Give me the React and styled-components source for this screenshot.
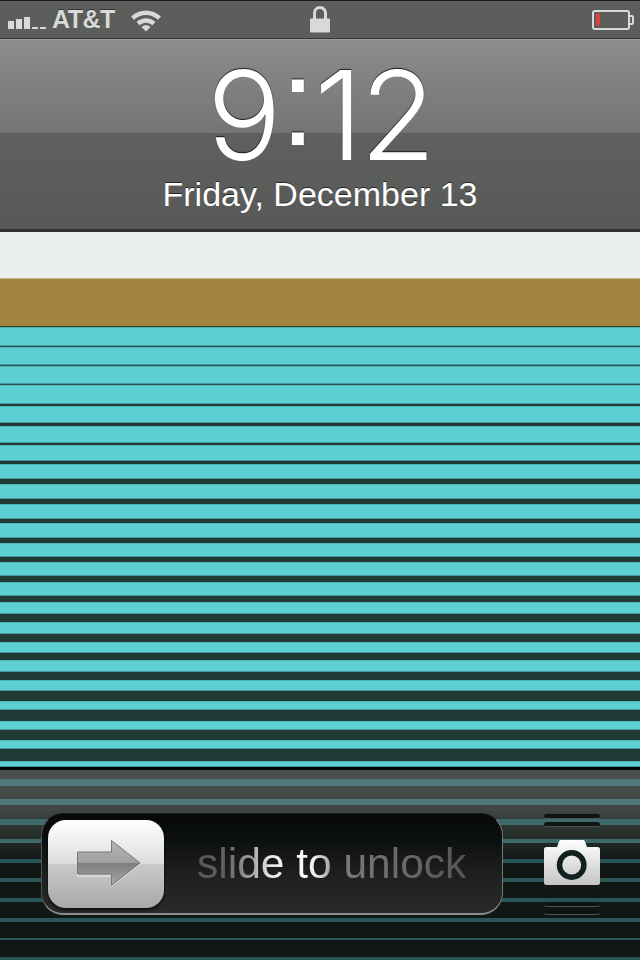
import React from 'react'
import styled, { createGlobalStyle } from 'styled-components'

const GlobalStyle = createGlobalStyle`
	html, body { margin: 0; padding: 0; background: #000; }
	body { font-family: "Liberation Sans", Arial, sans-serif; }
`

// [teal height, dark height] for every blind of the wallpaper, top to bottom
const BLINDS = [
	[19, 1], [18, 1], [18, 1], [19, 2], [17, 3], [17, 2], [16, 3], [15, 5],
	[15, 5], [15, 4], [15, 5], [14, 5], [14, 6], [14, 6], [12, 8], [12, 8],
	[11, 7], [12, 8], [11, 10], [9, 11], [9, 10], [9, 12], [6, 0],
]

// dimmed stripes that keep running behind the bottom bar: [top, bottom] from bar top
const DIM_BANDS = [
	[9, 16], [29, 35], [49, 55], [69, 73], [89, 93], [108, 112], [128, 132], [148, 152], [168, 170], [187, 190],
]

const bandStops = DIM_BANDS.map(([a, b], i) => {
	const mix = i < 2 ? '#50777a' : i < 4 ? '#3f6a6c' : '#2a5557'
	return `transparent ${a}px, ${mix} ${a}px, ${mix} ${b}px, transparent ${b}px`
}).join(', ')

const Phone = styled.div`
	width: 640px;
	height: 960px;
	display: flex;
	flex-direction: column;
	overflow: hidden;
	background: #000;
`

const StatusBar = styled.div`
	height: 39px;
	flex: none;
	display: grid;
	grid-template-columns: 1fr auto 1fr;
	align-items: center;
	padding: 0 8px;
	box-sizing: border-box;
	background: #5c5e5c;
	border-top: 1px solid #1a1a1a;
	border-bottom: 1px solid #353735;
	color: #d9d9d9;
`

const StatusLeft = styled.div`
	display: flex;
	align-items: center;
`

const Carrier = styled.span`
	font-size: 25px;
	font-weight: 700;
	letter-spacing: -0.5px;
	margin: 0 15px 0 6px;
	text-shadow: 0 -1px 0 rgba(0, 0, 0, 0.45);
`

const StatusRight = styled.div`
	display: flex;
	justify-content: flex-end;
	margin-right: -2px;
`

const ClockPanel = styled.div`
	height: 191px;
	flex: none;
	display: flex;
	flex-direction: column;
	align-items: center;
	box-sizing: border-box;
	color: #fff;
	background: linear-gradient(#8b8d8b 0, #737573 93px, #5f615f 93px, #575957 100%);
	border-top: 1px solid #9a9c9a;
	border-bottom: 1px solid #2e302e;
`

const Time = styled.div`
	font-family: "Inter", "Liberation Sans", sans-serif;
	font-weight: 300;
	font-size: 124px;
	line-height: 110px;
	margin-top: 20px;
	letter-spacing: -3px;
	text-shadow: 0 -1px 1px rgba(0, 0, 0, 0.8);
`

const Colon = styled.span`
	display: inline-block;
	font-family: "Liberation Sans", Arial, sans-serif;
	font-weight: 400;
	font-size: 125px;
	margin: 0 2px;
	transform: translateY(-15px);
`

const DateLine = styled.div`
	font-size: 34px;
	line-height: 36px;
	margin-top: 4px;
	text-shadow: 0 -1px 0 rgba(0, 0, 0, 0.6);
`

const Wallpaper = styled.div`
	flex: 1;
	display: flex;
	flex-direction: column;
`

const WhiteBand = styled.div`
	height: 46px;
	flex: none;
	background: #ebeff0;
	border-top: 2px solid #2f312f;
`

const GoldBand = styled.div`
	height: 47px;
	flex: none;
	background: #a0843f;
	border-top: 1px solid #c4b48a;
	border-bottom: 1px solid #2c3a2a;
`

const Blind = styled.div`
	flex: none;
	height: ${p => p.$teal + p.$dark}px;
	background: linear-gradient(
		#4fb4b8 1px,
		#5dd0d4 1px,
		#5dd0d4 ${p => p.$teal - 1}px,
		#46979a ${p => p.$teal - 1}px,
		#46979a ${p => p.$teal}px,
		${p => (p.$dark === 1 ? '#2c5556' : '#213a35')} ${p => p.$teal}px
	);
`

const BottomBar = styled.div`
	height: 193px;
	flex: none;
	display: flex;
	align-items: flex-start;
	box-sizing: border-box;
	padding: 43px 0 0 41px;
	border-top: 3px solid #050807;
	background:
		linear-gradient(to bottom, ${bandStops}, transparent),
		linear-gradient(#4c514f 0, #3f4643 40px, #2a322f 60px, #101715 92px, #101715 100%);
`

const Slider = styled.div`
	width: 462px;
	height: 102px;
	flex: none;
	display: flex;
	align-items: center;
	gap: 33px;
	padding-left: 6px;
	box-sizing: border-box;
	border-radius: 22px;
	border: 1px solid #1a1e1d;
	border-bottom: 2px solid #8a8c8b;
	border-left-color: #555;
	border-right-color: #777;
	background: linear-gradient(#060908 0, #0d1110 30%, #1c1e1d 55%, #2a2a2a 100%);
`

const Knob = styled.div`
	width: 116px;
	height: 88px;
	flex: none;
	display: flex;
	align-items: center;
	justify-content: center;
	padding-left: 6px;
	box-sizing: border-box;
	border-radius: 18px;
	background: linear-gradient(#ffffff 0, #dcdcdc 50%, #cacaca 50%, #a9a9a9 100%);
	box-shadow: 0 2px 3px rgba(0, 0, 0, 0.7);
`

const Hint = styled.span`
	font-size: 42.5px;
	line-height: 46px;
	background: linear-gradient(90deg, #585858 0, #606060 10%, #a0a0a0 20%, #e5e5e5 27%, #ffffff 36%, #eeeeee 44%, #9a9a9a 50%, #7a7a7a 55%, #555555 100%);
	-webkit-background-clip: text;
	background-clip: text;
	color: transparent;
`

const CameraGrabber = styled.div`
	flex: none;
	width: 56px;
	margin: 1px 0 0 41px;
	display: flex;
	flex-direction: column;
	align-items: center;
	gap: 3px;
`

const Groove = styled.div`
	width: 56px;
	height: 4px;
	border-radius: 3px;
	background: #0f1413;
	border-bottom: 1px solid #4a5352;
`

const CameraWrap = styled.div`
	margin: 10px 0 14px;
	height: 45px;
	display: flex;
`

const SignalIcon = () => (
	<svg width="38" height="19" viewBox="0 0 38 19">
		<g fill="#d9d9d9">
			<rect x="0" y="11" width="6" height="8" />
			<rect x="8" y="9" width="6" height="10" />
			<rect x="16" y="7" width="6" height="12" />
			<rect x="24" y="17" width="6" height="2" />
			<rect x="32" y="17" width="6" height="2" />
		</g>
	</svg>
)

const WifiIcon = () => (
	<svg width="32" height="24" viewBox="0 0 32 24">
		<path d="M1 8.5 C9.5 0.5 22.5 0.5 31 8.5 L28 11.8 C21 5.5 11 5.5 4 11.8 Z" fill="#d9d9d9" />
		<path d="M6.5 14 C12 9 20 9 25.5 14 L22.5 17.2 C18.5 13.8 13.5 13.8 9.5 17.2 Z" fill="#d9d9d9" />
		<path d="M11.5 19 C14 16.8 18 16.8 20.5 19 L16 23.5 Z" fill="#d9d9d9" />
	</svg>
)

const LockIcon = () => (
	<svg width="20" height="28" viewBox="0 0 20 28">
		<path d="M4.5 13 V7 A5.5 5.5 0 0 1 15.5 7 V13" fill="none" stroke="#d9d9d9" strokeWidth="3" />
		<rect x="0" y="12.5" width="20" height="14" rx="1" fill="#d9d9d9" />
	</svg>
)

const BatteryIcon = () => (
	<svg width="42" height="20" viewBox="0 0 42 20">
		<rect x="1" y="1" width="36" height="18" rx="2" fill="none" stroke="#d9d9d9" strokeWidth="2" />
		<path d="M38 6 h2 a1 1 0 0 1 1 1 v6 a1 1 0 0 1 -1 1 h-2" fill="none" stroke="#d9d9d9" strokeWidth="2" />
		<rect x="4" y="3.5" width="4" height="12" fill="#d8443a" />
	</svg>
)

const ArrowIcon = () => (
	<svg width="64" height="47" viewBox="0 0 64 47">
		<defs>
			<linearGradient id="arrowFill" x1="0" y1="0" x2="0" y2="1">
				<stop offset="0" stopColor="#b4b4b4" />
				<stop offset="0.5" stopColor="#a0a0a0" />
				<stop offset="0.5" stopColor="#7e7e7e" />
				<stop offset="1" stopColor="#a8a8a8" />
			</linearGradient>
		</defs>
		<path d="M0.5 13 H34.5 V1.5 L63 23 L34.5 45.5 V35 H0.5 Z" fill="none" stroke="#fff" strokeOpacity="0.7" transform="translate(0 1)" />
		<path d="M0.5 12 H34.5 V0.5 L63 23 L34.5 45.5 V34 H0.5 Z" fill="url(#arrowFill)" stroke="#777" />
	</svg>
)

const CameraIcon = () => (
	<svg width="56" height="45" viewBox="0 0 56 45">
		<defs>
			<linearGradient id="cameraFill" x1="0" y1="0" x2="0" y2="1">
				<stop offset="0" stopColor="#ffffff" />
				<stop offset="1" stopColor="#c4c4c4" />
			</linearGradient>
		</defs>
		<path
			fill="url(#cameraFill)"
			d="M2.5 7 H13 L15 1.5 Q15.5 0 17 0 H39 Q40.5 0 41 1.5 L43 7 H53.5 Q56 7 56 9.5 V42.5 Q56 45 53.5 45 H2.5 Q0 45 0 42.5 V9.5 Q0 7 2.5 7 Z"
		/>
		<circle cx="27.7" cy="25" r="12.2" fill="none" stroke="#12201f" strokeWidth="5.5" />
	</svg>
)

const App = () => (
	<Phone>
		<GlobalStyle />
		<StatusBar>
			<StatusLeft>
				<SignalIcon />
				<Carrier>AT&amp;T</Carrier>
				<WifiIcon />
			</StatusLeft>
			<LockIcon />
			<StatusRight>
				<BatteryIcon />
			</StatusRight>
		</StatusBar>
		<ClockPanel>
			<Time>9<Colon>:</Colon>12</Time>
			<DateLine>Friday, December 13</DateLine>
		</ClockPanel>
		<Wallpaper>
			<WhiteBand />
			<GoldBand />
			{BLINDS.map(([teal, dark], i) => (
				<Blind key={i} $teal={teal} $dark={dark} />
			))}
		</Wallpaper>
		<BottomBar>
			<Slider>
				<Knob>
					<ArrowIcon />
				</Knob>
				<Hint>slide to unlock</Hint>
			</Slider>
			<CameraGrabber>
				<Groove />
				<Groove />
				<CameraWrap>
					<CameraIcon />
				</CameraWrap>
				<Groove />
				<Groove />
			</CameraGrabber>
		</BottomBar>
	</Phone>
)

export default App
